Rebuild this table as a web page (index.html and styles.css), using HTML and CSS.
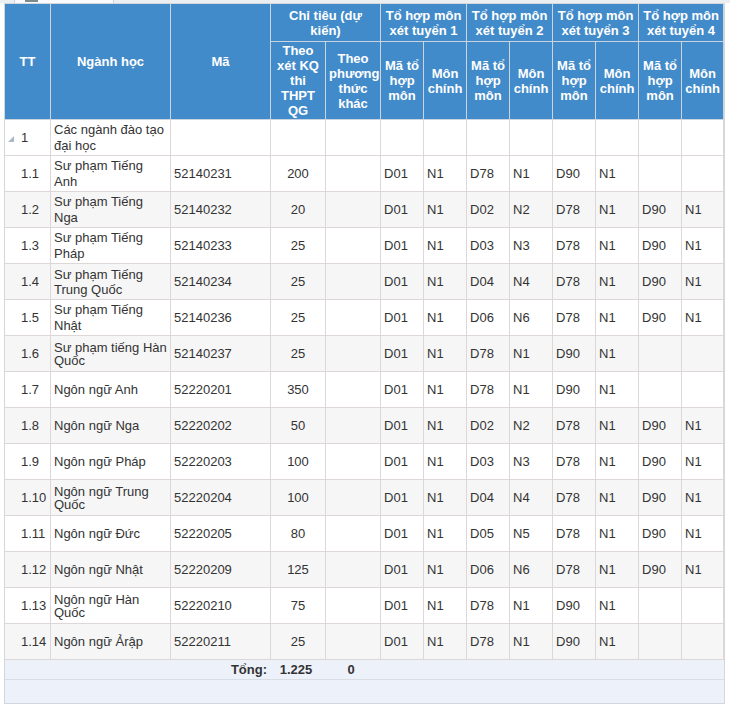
FILE: index.html
```html
<!DOCTYPE html>
<html lang="vi">
<head>
<meta charset="utf-8">
<title>Chỉ tiêu tuyển sinh</title>
<link rel="stylesheet" href="styles.css">
</head>
<body>
<div class="topbar"><div class="tab"><div class="knob"></div></div></div>
<div class="grid">
<table>
<colgroup>
<col class="w46"><col class="w120"><col class="w100"><col class="w55"><col class="w55">
<col class="w43"><col class="w43"><col class="w43"><col class="w43"><col class="w43"><col class="w43"><col class="w43"><col class="w42">
</colgroup>
<thead>
<tr class="h1">
<th rowspan="2">TT</th>
<th rowspan="2">Ngành học</th>
<th rowspan="2">Mã</th>
<th colspan="2">Chỉ tiêu (dự kiến)</th>
<th colspan="2">Tổ hợp môn xét tuyển 1</th>
<th colspan="2">Tổ hợp môn xét tuyển 2</th>
<th colspan="2">Tổ hợp môn xét tuyển 3</th>
<th colspan="2">Tổ hợp môn xét tuyển 4</th>
</tr>
<tr class="h2">
<th>Theo xét KQ thi THPT QG</th>
<th>Theo phương thức khác</th>
<th>Mã tổ hợp môn</th><th>Môn chính</th>
<th>Mã tổ hợp môn</th><th>Môn chính</th>
<th>Mã tổ hợp môn</th><th>Môn chính</th>
<th>Mã tổ hợp môn</th><th>Môn chính</th>
</tr>
</thead>
<tbody>
<tr class="group">
<td class="tt-group"><svg class="caret" width="6" height="6" viewBox="0 0 6 6"><polygon points="6,0 6,6 0,6" fill="#a9b7c9"/></svg>1</td>
<td>Các ngành đào tạo đại học</td><td></td><td></td><td></td><td></td><td></td><td></td><td></td><td></td><td></td><td></td><td></td>
</tr>
<tr><td class="tt">1.1</td><td>Sư phạm Tiếng Anh</td><td>52140231</td><td class="num">200</td><td></td><td>D01</td><td>N1</td><td>D78</td><td>N1</td><td>D90</td><td>N1</td><td></td><td></td></tr>
<tr class="alt"><td class="tt">1.2</td><td>Sư phạm Tiếng Nga</td><td>52140232</td><td class="num">20</td><td></td><td>D01</td><td>N1</td><td>D02</td><td>N2</td><td>D78</td><td>N1</td><td>D90</td><td>N1</td></tr>
<tr><td class="tt">1.3</td><td>Sư phạm Tiếng Pháp</td><td>52140233</td><td class="num">25</td><td></td><td>D01</td><td>N1</td><td>D03</td><td>N3</td><td>D78</td><td>N1</td><td>D90</td><td>N1</td></tr>
<tr class="alt"><td class="tt">1.4</td><td class="semi">Sư phạm Tiếng Trung Quốc</td><td>52140234</td><td class="num">25</td><td></td><td>D01</td><td>N1</td><td>D04</td><td>N4</td><td>D78</td><td>N1</td><td>D90</td><td>N1</td></tr>
<tr><td class="tt">1.5</td><td>Sư phạm Tiếng Nhật</td><td>52140236</td><td class="num">25</td><td></td><td>D01</td><td>N1</td><td>D06</td><td>N6</td><td>D78</td><td>N1</td><td>D90</td><td>N1</td></tr>
<tr class="alt"><td class="tt">1.6</td><td class="tight">Sư phạm tiếng Hàn Quốc</td><td>52140237</td><td class="num">25</td><td></td><td>D01</td><td>N1</td><td>D78</td><td>N1</td><td>D90</td><td>N1</td><td></td><td></td></tr>
<tr><td class="tt">1.7</td><td>Ngôn ngữ Anh</td><td>52220201</td><td class="num">350</td><td></td><td>D01</td><td>N1</td><td>D78</td><td>N1</td><td>D90</td><td>N1</td><td></td><td></td></tr>
<tr class="alt"><td class="tt">1.8</td><td>Ngôn ngữ Nga</td><td>52220202</td><td class="num">50</td><td></td><td>D01</td><td>N1</td><td>D02</td><td>N2</td><td>D78</td><td>N1</td><td>D90</td><td>N1</td></tr>
<tr><td class="tt">1.9</td><td>Ngôn ngữ Pháp</td><td>52220203</td><td class="num">100</td><td></td><td>D01</td><td>N1</td><td>D03</td><td>N3</td><td>D78</td><td>N1</td><td>D90</td><td>N1</td></tr>
<tr class="alt"><td class="tt">1.10</td><td class="tight">Ngôn ngữ Trung Quốc</td><td>52220204</td><td class="num">100</td><td></td><td>D01</td><td>N1</td><td>D04</td><td>N4</td><td>D78</td><td>N1</td><td>D90</td><td>N1</td></tr>
<tr><td class="tt">1.11</td><td>Ngôn ngữ Đức</td><td>52220205</td><td class="num">80</td><td></td><td>D01</td><td>N1</td><td>D05</td><td>N5</td><td>D78</td><td>N1</td><td>D90</td><td>N1</td></tr>
<tr class="alt"><td class="tt">1.12</td><td>Ngôn ngữ Nhật</td><td>52220209</td><td class="num">125</td><td></td><td>D01</td><td>N1</td><td>D06</td><td>N6</td><td>D78</td><td>N1</td><td>D90</td><td>N1</td></tr>
<tr><td class="tt">1.13</td><td class="tight">Ngôn ngữ Hàn Quốc</td><td>52220210</td><td class="num">75</td><td></td><td>D01</td><td>N1</td><td>D78</td><td>N1</td><td>D90</td><td>N1</td><td></td><td></td></tr>
<tr class="alt"><td class="tt">1.14</td><td>Ngôn ngữ Ảrập</td><td>52220211</td><td class="num">25</td><td></td><td>D01</td><td>N1</td><td>D78</td><td>N1</td><td>D90</td><td>N1</td><td></td><td></td></tr>
</tbody>
<tfoot>
<tr>
<td colspan="3" class="total-label">Tổng:</td>
<td class="num fnum">1.225</td>
<td class="num fnum">0</td>
<td colspan="8"></td>
</tr>
</tfoot>
</table>
<div class="pager"></div>
</div>
</body>
</html>
```
FILE: styles.css
```css
body {
  margin: 0;
  font-family: "Liberation Sans", Arial, sans-serif;
  font-size: 13px;
  color: #333;
  background: #fff;
}

.topbar {
  height: 3px;
  background: #eceff2;
  display: flex;
}
.topbar .tab {
  margin-left: 14px;
  width: 98px;
  border-left: 1px solid #cdd2d6;
  border-right: 1px solid #cdd2d6;
  background: #f9fafb;
}
.topbar .knob {
  margin-left: 10px;
  width: 13px;
  height: 2px;
  background: #7c898d;
}

.grid {
  margin-left: 4px;
  width: 719px;
  border: 1px solid #d3d6da;
}

table {
  border-collapse: separate;
  border-spacing: 0;
  table-layout: fixed;
  width: 719px;
}

col.w46 { width: 46px; }
col.w120 { width: 120px; }
col.w100 { width: 100px; }
col.w55 { width: 55px; }
col.w43 { width: 43px; }
col.w42 { width: 42px; }

th, td {
  padding: 0 3px;
  border-right: 1px solid #ddd7d7;
  border-bottom: 1px solid #ddd7d7;
}

th {
  background: #428bca;
  color: #fff;
  font-weight: bold;
  line-height: 15px;
  text-align: center;
  vertical-align: middle;
  border-color: #c9d4df;
}

tr.h1 { height: 38px; }
tr.h2 { height: 78px; }

tbody tr { height: 36px; }
tbody tr.alt td { background: #f6f6f6; }

td {
  line-height: 16px;
  vertical-align: middle;
  text-align: left;
}

td.tt {
  text-align: left;
  padding-left: 16px;
  padding-right: 0;
}
td.num { text-align: center; }
td.tight { line-height: 13px; }
td.semi { line-height: 15px; }

td.tt-group {
  text-align: left;
}
.caret {
  display: inline-block;
  vertical-align: middle;
  margin: 0 7px 0 0;
  position: relative;
  top: 1px;
}

tfoot tr { height: 20px; }
tfoot td {
  background: #edf1f9;
  border-right: none;
  border-bottom: 1px solid #d8dde6;
  font-weight: bold;
  line-height: 16px;
}
td.total-label {
  text-align: right;
  padding-right: 4px;
}
td.fnum { padding-right: 8px; }

.pager {
  height: 23px;
  background: #edf1f9;
}
```
